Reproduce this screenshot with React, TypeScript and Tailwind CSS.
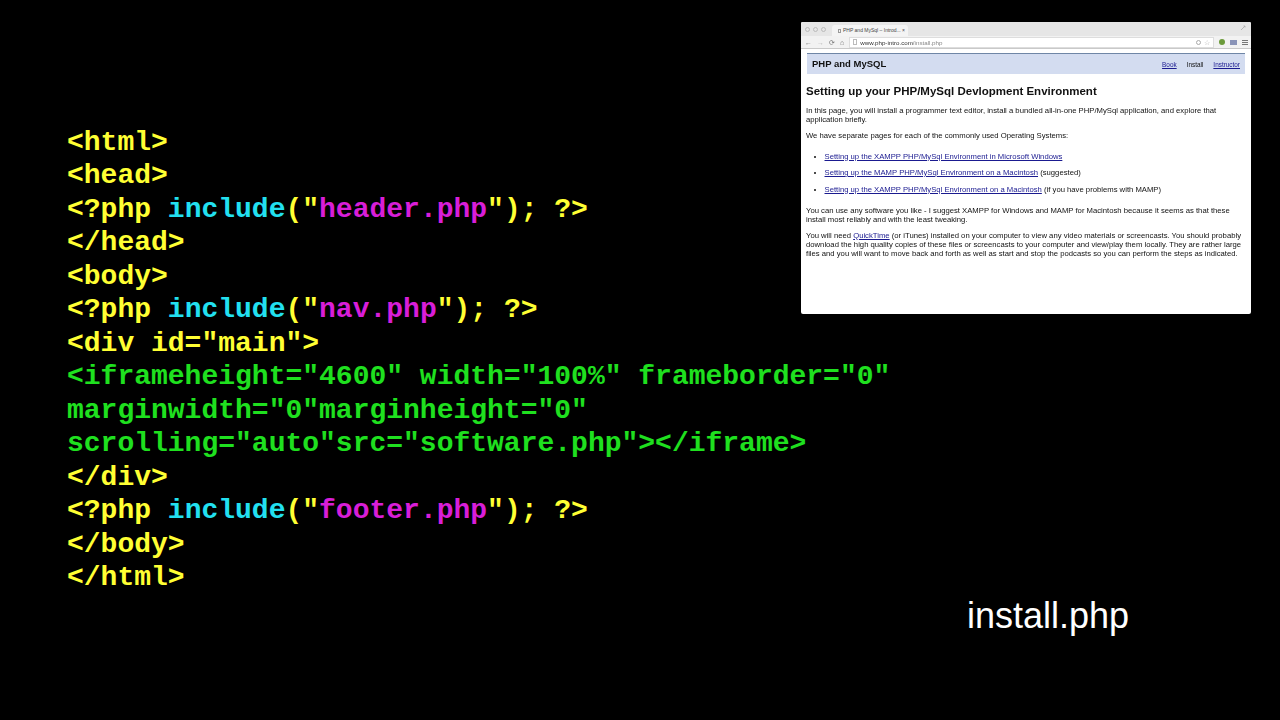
import type { ReactNode } from "react";

const Y = ({ children }: { children: ReactNode }) => <span className="text-[#ffff33]">{children}</span>;
const C = ({ children }: { children: ReactNode }) => <span className="text-[#22e0f0]">{children}</span>;
const M = ({ children }: { children: ReactNode }) => <span className="text-[#d81ed8]">{children}</span>;
const G = ({ children }: { children: ReactNode }) => <div className="text-[#1fe01f]">{children}</div>;

const Include = ({ file }: { file: string }) => (
  <div>
    <Y>{"<?php "}</Y>
    <C>include</C>
    <Y>{'("'}</Y>
    <M>{file}</M>
    <Y>{'"); ?>'}</Y>
  </div>
);

const Line = ({ t }: { t: string }) => <div><Y>{t}</Y></div>;

const A = ({ children }: { children: ReactNode }) => <span className="underline text-[#1a1a90]">{children}</span>;

function Shot() {
  return (
    <div className="absolute left-[801px] top-[22px] w-[450px] h-[292px] bg-white rounded-[2px] overflow-hidden flex flex-col text-[7.7px] leading-[9px] text-[#111] font-['Liberation_Sans',Arial,sans-serif] blur-[0.3px]">
      <div className="h-[29px] bg-white flex flex-col shrink-0">
        <div className="h-[14px] flex items-end pl-[4px] pr-[4px] bg-[#e6e6e6]">
          <div className="flex gap-[3px] items-center pb-[4px] w-[27px]">
            <span className="w-[5px] h-[5px] rounded-full border border-[#bbb]" />
            <span className="w-[5px] h-[5px] rounded-full border border-[#bbb]" />
            <span className="w-[5px] h-[5px] rounded-full border border-[#bbb]" />
          </div>
          <div className="w-[76px] h-[11px] bg-[#f4f4f4] rounded-t-[3px] flex items-center gap-[2px] text-[5px] leading-[11px] pl-[6px] text-[#444] whitespace-nowrap overflow-hidden">
            <span className="w-[3px] h-[4px] border border-[#999] shrink-0" />
            <span>PHP and MySql – Introd... ×</span>
          </div>
          <div className="flex-1" />
          <svg width="6" height="6" viewBox="0 0 6 6" className="mb-[5px] mr-[1px]"><path d="M1 5L5 1M3.5 1H5V2.5" stroke="#aaa" fill="none" strokeWidth="0.8" /></svg>
        </div>
        <div className="h-[13px] flex items-center bg-[#f2f2f2] border-b border-[#c9c9c9] pl-[4px] pr-[3px] gap-[5px] text-[#777]">
          <span className="text-[7px]">←</span>
          <span className="text-[7px] text-[#bbb]">→</span>
          <span className="text-[7px]">⟳</span>
          <span className="text-[7px]">⌂</span>
          <div className="flex-1 h-[11px] bg-white border border-[#ddd] flex items-center px-[3px] gap-[3px] text-[6.2px] text-[#333]">
            <span className="w-[4px] h-[6px] border border-[#bbb]" />
            <span className="flex-1">www.php-intro.com<span className="text-[#888]">/install.php</span></span>
            <span className="w-[5px] h-[5px] rounded-full border border-[#aaa]" />
            <span className="text-[7px] text-[#aaa]">☆</span>
          </div>
          <span className="w-[6px] h-[6px] rounded-full bg-[#6b9a3a]" />
          <span className="w-[7px] h-[5px] bg-[#8a94b8]" />
          <span className="w-[6px] h-[5px] border-y border-[#777]"><span className="block h-[1px] mt-[1px] bg-[#777]" /></span>
        </div>
      </div>
      <div className="pl-[6px] pr-[6px] pt-[2px]">
        <div className="h-[21px] bg-[#d3dcf0] border-t border-[#6f86a6] flex items-center pl-[5px] pr-[5px]">
          <span className="font-bold text-[9.5px] text-[#111] flex-1 -translate-y-[1px]">PHP and MySQL</span>
          <div className="flex gap-[10px] text-[6.4px]">
            <A>Book</A>
            <span>Install</span>
            <A>Instructor</A>
          </div>
        </div>
      </div>
      <div className="pl-[5px] pr-[5px] pt-[10.5px]">
        <div className="font-bold text-[11.5px] leading-[13px] text-[#111]">Setting up your PHP/MySql Devlopment Environment</div>
        <p className="mt-[8px]">In this page, you will install a programmer text editor, install a bundled all-in-one PHP/MySql application, and explore that application briefly.</p>
        <p className="mt-[7px]">We have separate pages for each of the commonly used Operating Systems:</p>
        <ul className="mt-[12px] pl-[18.5px] list-disc flex flex-col gap-[7.5px]">
          <li><A>Setting up the XAMPP PHP/MySql Environment in Microsoft Windows</A></li>
          <li><A>Setting up the MAMP PHP/MySql Environment on a Macintosh</A> (suggested)</li>
          <li><A>Setting up the XAMPP PHP/MySql Environment on a Macintosh</A> (if you have problems with MAMP)</li>
        </ul>
        <p className="mt-[12px]">You can use any software you like - I suggest XAMPP for Windows and MAMP for Macintosh because it seems as that these install most reliably and with the least tweaking.</p>
        <p className="mt-[7px]">You will need <A>QuickTime</A> (or iTunes) installed on your computer to view any video materials or screencasts. You should probably download the high quality copies of these files or screencasts to your computer and view/play them locally. They are rather large files and you will want to move back and forth as well as start and stop the podcasts so you can perform the steps as indicated.</p>
      </div>
    </div>
  );
}

export default function App() {
  return (
    <div className="relative w-[1280px] h-[720px] bg-black overflow-hidden">
      <Shot />
      <div className="flex flex-col pt-[125.6px] pl-[67px]">
        <div className="font-['Liberation_Mono','Courier_New',monospace] font-bold text-[28px] leading-[33.5px] whitespace-pre">
          <Line t="<html>" />
          <Line t="<head>" />
          <Include file="header.php" />
          <Line t="</head>" />
          <Line t="<body>" />
          <Include file="nav.php" />
          <Line t={'<div id="main">'} />
          <G>{'<iframeheight="4600" width="100%" frameborder="0"'}</G>
          <G>{'marginwidth="0"marginheight="0"'}</G>
          <G>{'scrolling="auto"src="software.php"></iframe>'}</G>
          <Line t="</div>" />
          <Include file="footer.php" />
          <Line t="</body>" />
          <Line t="</html>" />
        </div>
        <div className="self-start ml-[900px] text-white text-[36px] leading-[41px] font-['Liberation_Sans',Arial,sans-serif]">install.php</div>
      </div>
    </div>
  );
}
